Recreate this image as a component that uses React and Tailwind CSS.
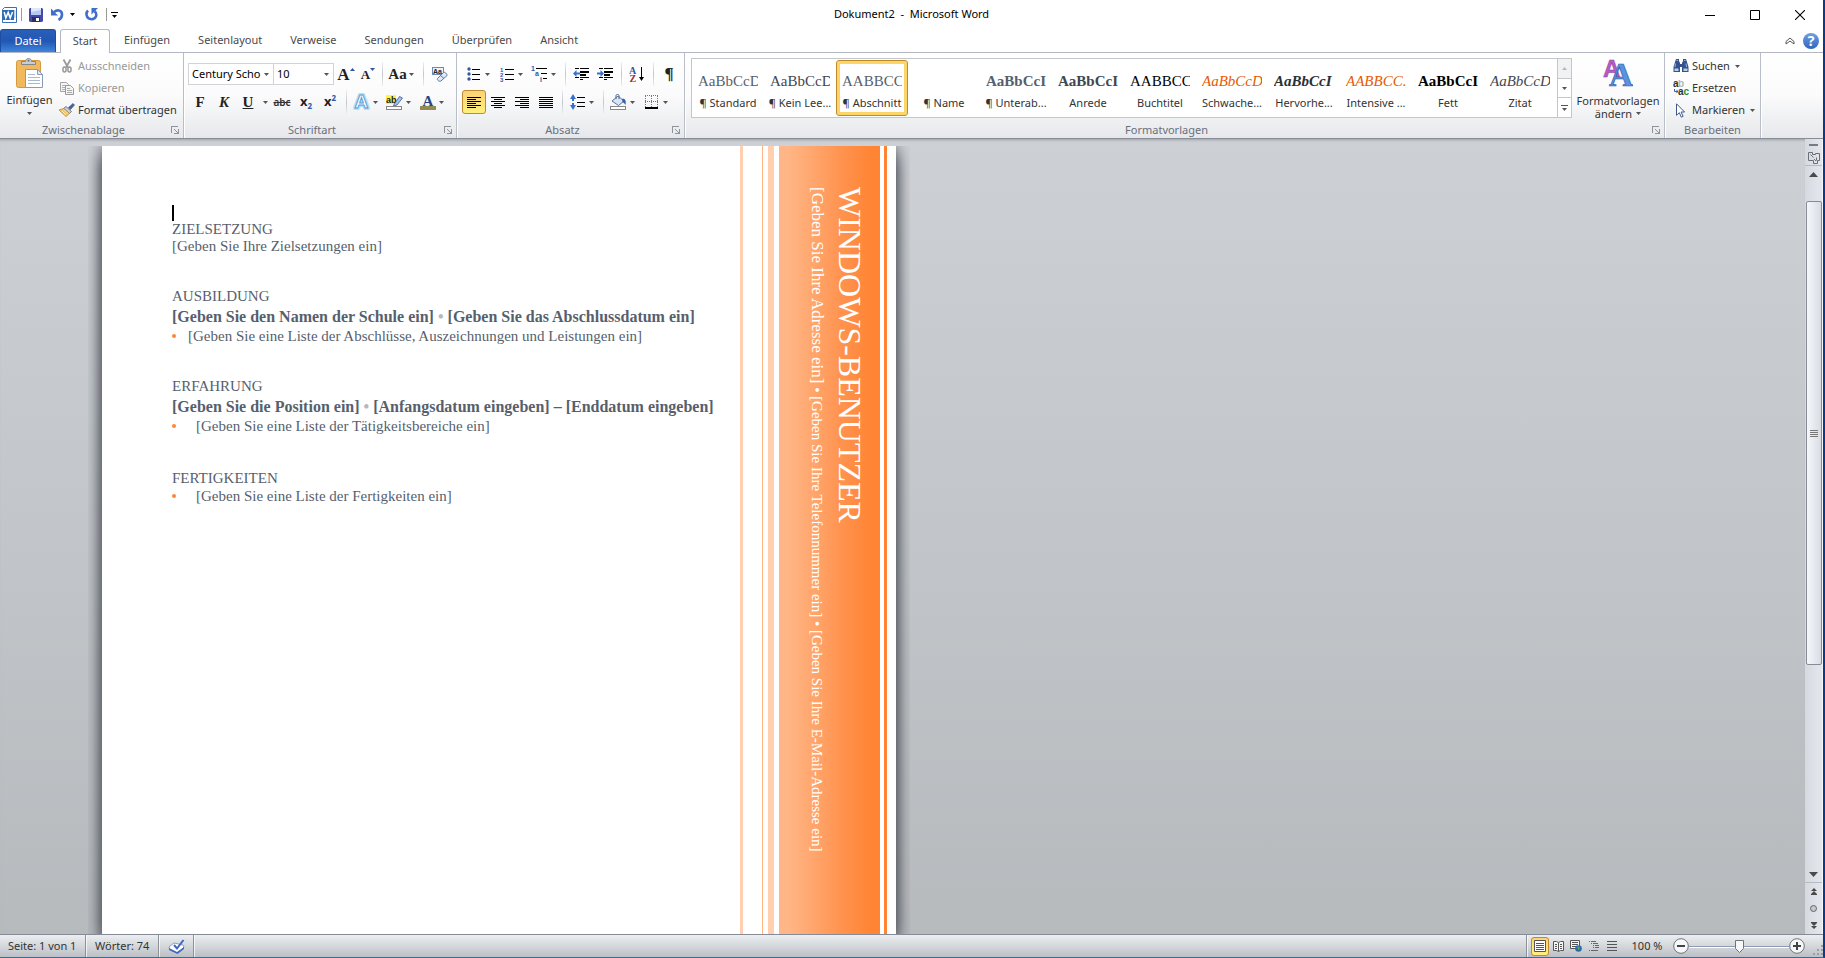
import React from "react";

const SERIF = "font-['Liberation_Serif',serif]";

/* ---------- small shared pieces ---------- */

function Caret({ className = "text-[#555]" }) {
  return (
    <svg width="5" height="3" viewBox="0 0 5 3" className={"shrink-0 " + className} aria-hidden="true">
      <path d="M0 0h5L2.5 3z" fill="currentColor" />
    </svg>
  );
}

function Tool({ label, children, active, className = "w-6" }) {
  return (
    <button
      type="button"
      aria-label={label}
      className={
        "flex h-6 shrink-0 items-center justify-center " +
        (active
          ? "rounded-[3px] border border-[#c08a30] bg-linear-to-b from-[#fbd277] to-[#fff07c] "
          : "") +
        className
      }
    >
      {children}
    </button>
  );
}

function Split({ label, children }) {
  return (
    <button type="button" aria-label={label} className="flex h-6 w-[33px] shrink-0 items-center">
      <span className="flex w-[23px] items-center justify-center">{children}</span>
      <Caret />
    </button>
  );
}

function Sep() {
  return (
    <span className="flex h-6 w-2 shrink-0 justify-center">
      <span className="h-full w-px bg-linear-to-b from-[#eceef0] via-[#c3c7cd] to-[#eceef0]" />
    </span>
  );
}

function Launcher({ label }) {
  return (
    <button type="button" aria-label={label} className="flex h-4 w-4 items-center justify-center">
      <svg width="8" height="8" viewBox="0 0 8 8" shapeRendering="crispEdges">
        <path d="M0 7V0h7v1H1v6z" fill="#8f949b" />
        <path d="M3 3h1v1h1v1h1v1h1V3h1v5H3V7h3V6H5V5H4V4H3z" fill="#8f949b" />
      </svg>
    </button>
  );
}

function Group({ title, launcher, className = "", children }) {
  return (
    <section
      aria-label={title}
      className={"flex shrink-0 flex-col border-r border-[#b9bdc7] shadow-[1px_0_0_#ffffff] " + className}
    >
      <div className="flex-1">{children}</div>
      <div className="flex h-4 items-center">
        <span className="flex-1 text-center text-[#6a6f7c]">{title}</span>
        {launcher && <Launcher label={title + " öffnen"} />}
      </div>
    </section>
  );
}

function Lines({ rows }) {
  return (
    <svg width="14" height="13" viewBox="0 0 14 13" shapeRendering="crispEdges" fill="#000">
      {rows.map(([x, w], i) => (
        <rect key={i} x={x} y={i * 2 + 1} width={w} height="1" />
      ))}
    </svg>
  );
}

/* ---------- icons ---------- */

function WordIcon() {
  return (
    <svg width="16" height="16" viewBox="0 0 16 16">
      <path d="M1.5 2.5l2-2h12v15h-14z" fill="#fff" stroke="#3a6fb5" />
      <path d="M13 4h1.5M13 6h1.5M13 8h1.5M13 10h1.5" stroke="#7fa6d6" />
      <rect x="2" y="3" width="11" height="10" fill="#2b6cb8" />
      <path d="M3.2 5l1.6 6 2.4-5.6L9.2 11 11.500 5" fill="none" stroke="#fff" strokeWidth="1.500" />
    </svg>
  );
}

function SaveIcon() {
  return (
    <svg width="14" height="14" viewBox="0 0 14 14">
      <path d="M0 1l1-1h12l1 1v12l-1 1H1l-1-1z" fill="#4549a8" />
      <path d="M2 0h10v7H2z" fill="#dfe7fa" />
      <path d="M2 4l10-2v5H2z" fill="#b6c8f2" />
      <path d="M3 9h8v5H3z" fill="#2c2e66" />
      <path d="M7 10h3v3H7z" fill="#fff" />
    </svg>
  );
}

function UndoIcon() {
  return (
    <svg width="13" height="13" viewBox="0 0 13 13">
      <path d="M3 4C7 1 11 2.500 11 6.500 11 9 9.500 11 7.500 12" fill="none" stroke="#3f6fcc" strokeWidth="2.600" />
      <path d="M0 .5v7h7z" fill="#3f6fcc" />
    </svg>
  );
}

function RedoIcon() {
  return (
    <svg width="13" height="13" viewBox="0 0 13 13">
      <path d="M3 2.500C.5 5 1 11.200 6.500 11.200S12.300 5.500 9.500 3" fill="none" stroke="#3f6fcc" strokeWidth="2.600" />
      <path d="M6.500 0H13L6.500 6.500z" fill="#3f6fcc" />
    </svg>
  );
}

function PasteIcon() {
  return (
    <svg width="28" height="31" viewBox="0 0 28 31">
      <rect x="0.500" y="2.500" width="24" height="27" rx="2" fill="#f0b95e" stroke="#d39a3f" />
      <path d="M5.500 6.500V3.500h4c0-4 6-4 6 0h4v3z" fill="#c9ccd0" stroke="#83868b" />
      <circle cx="12.500" cy="2.800" r="1" fill="#6d7075" />
      <path d="M9.500 11.500h12l5 5v13h-17z" fill="#fff" stroke="#8a9bb5" />
      <path d="M21.500 11.500v5h5z" fill="#e4ebf5" stroke="#8a9bb5" />
      <path d="M12 16.500h7M12 19.500h12M12 22.500h12M12 25.500h12" stroke="#a8b9d3" />
    </svg>
  );
}

function CutIcon() {
  return (
    <svg width="10" height="14" viewBox="0 0 10 14" fill="none" stroke="#9a9a9a">
      <path d="M1.500.5l4.500 8M8.500.5L4 8.500" strokeWidth="1.800" />
      <ellipse cx="2.500" cy="10.500" rx="1.600" ry="2.500" strokeWidth="1.500" />
      <ellipse cx="7.500" cy="10.500" rx="1.600" ry="2.500" strokeWidth="1.500" />
    </svg>
  );
}

function CopyIcon() {
  return (
    <svg width="16" height="13" viewBox="0 0 16 13">
      <path d="M1.500.5h6l2 2v7h-8z" fill="#f4f4f4" stroke="#a3a3a3" />
      <path d="M3 3.500h4M3 5.500h3M3 7.500h3" stroke="#b0b0b0" />
      <path d="M6.500 3.500h5l3 3v6h-8z" fill="#f4f4f4" stroke="#999" />
      <path d="M8 6.500h3M8 8.500h5M8 10.500h5" stroke="#aaa" />
    </svg>
  );
}

function BrushIcon() {
  return (
    <svg width="16" height="14" viewBox="0 0 16 14">
      <path d="M9.500 4.500L14 .5l1.500 1.500-4 4.500z" fill="#4a63a0" stroke="#33477a" strokeWidth=".6" />
      <path d="M7 3.500l5.500 5-2 2-6-5z" fill="#c9cdd6" stroke="#5f6570" strokeWidth=".8" />
      <path d="M4.500 5.500l6 5-3.500 3-7-6.500z" fill="#f3c56a" stroke="#b98a35" strokeWidth=".8" />
      <path d="M3 8l4 4M5 6.700l4 4" stroke="#fff3c9" strokeWidth=".8" />
    </svg>
  );
}

function ClearFormatIcon() {
  return (
    <svg width="17" height="16" viewBox="0 0 17 16">
      <rect x="1.500" y="1.500" width="11" height="7" fill="#e9f1fb" stroke="#6b8bb8" />
      <text x="2" y="8" fontSize="7" fontWeight="700" fontFamily="Liberation Sans" fill="#222">Aa</text>
      <path d="M6.500 12.500l6-6c1-1 4 1.500 3.500 3l-6 5.500c-1.500 1-4.500-1-3.500-2.500z" fill="#dfe9f7" stroke="#5c76a4" />
      <path d="M9.500 9.500l3.500 3" stroke="#5c76a4" />
    </svg>
  );
}

function HighlightIcon() {
  return (
    <svg width="17" height="15" viewBox="0 0 17 15">
      <rect x="0" y="0" width="10" height="9" fill="#fff34d" />
      <text x="0" y="8" fontSize="9" fontWeight="700" fontFamily="Liberation Sans" fill="#222">ab</text>
      <path d="M8 9.500l5.500-8 3 1.500-5.500 7-3.500 1z" fill="#a9c3e8" stroke="#3d5a8f" strokeWidth=".8" />
      <rect x="0.500" y="11.500" width="15" height="3" fill="#fff" stroke="#888" />
    </svg>
  );
}

function FontColorIcon() {
  return (
    <svg width="16" height="15" viewBox="0 0 16 15">
      <text x="2.500" y="10.500" fontSize="15" fontWeight="700" fontFamily="Liberation Serif" fill="#27457f">A</text>
      <rect x="0" y="11" width="16" height="4" fill="#948a54" />
    </svg>
  );
}

function EffectIcon() {
  return (
    <svg width="17" height="18" viewBox="0 0 17 18">
      <text x="1.500" y="15" fontSize="19" fontWeight="700" fontFamily="Liberation Sans" fill="#fff" stroke="#b5e0f7" strokeWidth="4" strokeLinejoin="round" paintOrder="stroke" aria-hidden="true">A</text>
      <text x="1.500" y="15" fontSize="19" fontWeight="700" fontFamily="Liberation Sans" fill="#fff" stroke="#5b9bd5" strokeWidth="1">A</text>
    </svg>
  );
}

function BulletsIcon() {
  return (
    <svg width="14" height="14" viewBox="0 0 14 14">
      <g fill="#2f57a6">
        <circle cx="2" cy="2" r="1.700" />
        <circle cx="2" cy="7" r="1.700" />
        <circle cx="2" cy="12" r="1.700" />
      </g>
      <path d="M5 2.500h8M5 7.500h8M5 12.500h8" stroke="#000" />
    </svg>
  );
}

function NumbersIcon() {
  return (
    <svg width="14" height="15" viewBox="0 0 14 15">
      <g fill="#2f57a6" fontSize="6" fontWeight="700" fontFamily="Liberation Sans">
        <text x="0" y="4.500">1</text>
        <text x="0" y="9.500">2</text>
        <text x="0" y="14.500">3</text>
      </g>
      <path d="M5 2.500h9M5 7.500h9M5 12.500h9" stroke="#000" />
    </svg>
  );
}

function MultiLevelIcon() {
  return (
    <svg width="17" height="16" viewBox="0 0 17 16">
      <g fill="#2f57a6" fontSize="7" fontWeight="700" fontFamily="Liberation Sans">
        <text x="0" y="5">1</text>
        <text x="4" y="10">a</text>
        <text x="9" y="15.500">i</text>
      </g>
      <path d="M5 2.500h11M10 7.500h6M12 12.500h4" stroke="#000" />
    </svg>
  );
}

function IndentIcon({ out }) {
  return (
    <svg width="17" height="14" viewBox="0 0 17 14">
      <g shapeRendering="crispEdges" fill="#000">
        <rect x="2" y="1" width="4" height="1" />
        <rect x="7" y="1" width="9" height="1" />
        <rect x="7" y="4" width="9" height="2" />
        <rect x="7" y="7" width="6" height="2" />
        <rect x="2" y="10" width="4" height="1" />
        <rect x="7" y="10" width="9" height="1" />
        <rect x="7" y="12" width="3" height="1" />
      </g>
      {out ? (
        <path d="M0 6.500L3.500 3v2.500H7v2H3.500V10z" fill="#3a6fd0" />
      ) : (
        <path d="M7 6.500L3.500 3v2.500H0v2h3.500V10z" fill="#3a6fd0" />
      )}
    </svg>
  );
}

function SortIcon() {
  return (
    <svg width="16" height="16" viewBox="0 0 16 16">
      <text x="0" y="7.500" fontSize="10" fontWeight="700" fontFamily="Liberation Serif" fill="#2f57a6">A</text>
      <text x="0.500" y="15.500" fontSize="10" fontWeight="700" fontFamily="Liberation Serif" fill="#9c2f2f">Z</text>
      <path d="M12.500 1v13" stroke="#000" />
      <path d="M10 11h5l-2.500 4z" fill="#000" />
    </svg>
  );
}

function SpacingIcon() {
  return (
    <svg width="16" height="16" viewBox="0 0 16 16">
      <path d="M0 5l3-5 3 5H4v2H2V5zM0 11l3 5 3-5H4V9H2v2z" fill="#3a6fd0" />
      <path d="M7 3.500h8M7 8.500h8M7 12.500h8" stroke="#000" />
    </svg>
  );
}

function FillIcon() {
  return (
    <svg width="17" height="16" viewBox="0 0 17 16">
      <path d="M2 7l6-5 6 5-5.500 4.500z" fill="#d7e4f5" stroke="#4d6690" strokeWidth=".9" />
      <path d="M6 5V1.500c0-1.500 3-1.500 3 0V5" fill="none" stroke="#4d6690" />
      <path d="M12 5c3-1 4.500 2 3.500 6-1-1.500-1.500-2-3-3z" fill="#2f62b5" />
      <rect x="0.500" y="12.500" width="15" height="3" fill="#fff" stroke="#888" />
    </svg>
  );
}

function BorderIcon() {
  return (
    <svg width="14" height="14" viewBox="0 0 14 14" shapeRendering="crispEdges">
      <path d="M.5 1v11M6.500 1v11M12.500 1v11M0 .5h13M0 6.500h13" stroke="#777" strokeDasharray="1 1" />
      <path d="M0 13h13" stroke="#000" strokeWidth="2" />
    </svg>
  );
}

function ChangeStylesIcon() {
  return (
    <svg width="30" height="28" viewBox="0 0 30 28">
      <text x="0" y="18" fontSize="24" fontWeight="700" fontFamily="Liberation Sans" fill="#b45cc4" stroke="#8d3b9e" strokeWidth=".5">A</text>
      <text x="6" y="27" fontSize="33" fontWeight="700" fontFamily="Liberation Serif" fill="#5b92e0" stroke="#2f62ad" strokeWidth=".7">A</text>
    </svg>
  );
}

function BinocularsIcon() {
  return (
    <svg width="16" height="14" viewBox="0 0 16 14">
      <path d="M3 0h3v2l1 2v9H.5V8L2 3zM13 0h-3v2L9 4v9h6.500V8L14 3z" fill="#34528c" />
      <path d="M6.500 5h3v3h-3z" fill="#34528c" />
      <path d="M2.500 4.500L2 8M13 4.500l.5 3.500M3.500 1.500h1.500M11 1.500h1.500" stroke="#9db6de" />
      <path d="M1.500 9.500h4v2.500h-4zM10.500 9.500h4v2.500h-4z" fill="#b9cdea" />
    </svg>
  );
}

function ReplaceIcon() {
  return (
    <svg width="16" height="16" viewBox="0 0 16 16" fontFamily="Liberation Sans" fontWeight="700" fontSize="10">
      <text x="0" y="7" fill="#333">a</text>
      <text x="5" y="7" fill="#b5b5b5">b</text>
      <text x="5" y="15" fill="#333">a</text>
      <text x="10.500" y="15" fill="#1f8f2f">c</text>
      <path d="M1.500 9v2.500H4" fill="none" stroke="#3560ad" />
      <path d="M3.500 9.500v4l2-2z" fill="#3560ad" />
    </svg>
  );
}

function PointerIcon() {
  return (
    <svg width="16" height="15" viewBox="0 0 16 15">
      <path d="M3.500.8v11.500l2.800-2.600 2 4.500 1.800-.8-2-4.400h3.500z" fill="#fff" stroke="#40598c" />
    </svg>
  );
}

function ProofIcon() {
  return (
    <svg width="17" height="15" viewBox="0 0 17 15">
      <path d="M1 8l5-4 9 2 1 2-6 6-8-3z" fill="#fff" stroke="#7d8699" strokeWidth=".8" />
      <path d="M1 9l8 4 7-5v2l-6.500 5L1 11z" fill="#3f66c0" />
      <path d="M6 6l3 3.500L15.500 1" fill="none" stroke="#3f66c0" strokeWidth="2" />
    </svg>
  );
}

/* ---------- title bar and tabs ---------- */

function TitleBar() {
  return (
    <header className="flex h-[29px] shrink-0 items-center">
      <div className="flex flex-1 items-center">
        <span className="ml-px">
          <WordIcon />
        </span>
        <span className="ml-1 h-[13px] w-px bg-[#9a9a9a]" />
        <button type="button" aria-label="Speichern" className="ml-[7px]">
          <SaveIcon />
        </button>
        <button type="button" aria-label="Rückgängig" className="ml-2 flex items-center gap-1.5">
          <UndoIcon />
          <Caret className="text-black" />
        </button>
        <button type="button" aria-label="Wiederholen" className="ml-2.5">
          <RedoIcon />
        </button>
        <span className="ml-2 h-[13px] w-px bg-[#9a9a9a]" />
        <button type="button" aria-label="Symbolleiste anpassen" className="ml-1 flex flex-col items-center gap-0.5">
          <span className="h-px w-[7px] bg-black" />
          <Caret className="text-black" />
        </button>
      </div>
      <h1 className="text-center whitespace-pre text-black">Dokument2&nbsp; -&nbsp; Microsoft Word</h1>
      <div className="flex flex-1 items-center justify-end gap-[35px]">
        <button type="button" aria-label="Minimieren">
          <svg width="10" height="10" viewBox="0 0 10 10"><path d="M0 5.500h10" stroke="#000" /></svg>
        </button>
        <button type="button" aria-label="Maximieren">
          <svg width="10" height="10" viewBox="0 0 10 10"><path d="M.5.5h9v9h-9z" fill="none" stroke="#000" /></svg>
        </button>
        <button type="button" aria-label="Schließen" className="mr-[18px]">
          <svg width="10" height="10" viewBox="0 0 10 10"><path d="M0 0l10 10M10 0L0 10" stroke="#000" strokeWidth="1.100" /></svg>
        </button>
      </div>
    </header>
  );
}

const TABS = ["Einfügen", "Seitenlayout", "Verweise", "Sendungen", "Überprüfen", "Ansicht"];

function TabBar() {
  return (
    <nav className="flex h-6 shrink-0 items-stretch border-b border-[#b3b7c1] text-[#4a4a4a]">
      <button type="button" className="w-14 rounded-t-[3px] border border-b-0 border-[#1c4fa3] bg-linear-to-b from-[#2a5fb8] via-[#2157b3] to-[#3f86dd] text-white">
        Datei
      </button>
      <button type="button" className="-mb-px ml-1 w-[50px] rounded-t-[3px] border border-b-0 border-[#b3b7c1] bg-white">
        Start
      </button>
      {TABS.map((t) => (
        <button key={t} type="button" className="px-[14px]">
          {t}
        </button>
      ))}
      <div className="ml-auto flex items-center gap-2 pr-1">
        <button type="button" aria-label="Menüband minimieren">
          <svg width="10" height="8" viewBox="0 0 10 8">
            <path d="M5 1L1 4.500V7l4-3 4 3V4.500z" fill="none" stroke="#555" />
          </svg>
        </button>
        <button type="button" aria-label="Hilfe" className="flex h-4 w-4 items-center justify-center rounded-full bg-linear-to-b from-[#6f9fe6] to-[#2f65bb] text-sm leading-none font-bold text-white">
          ?
        </button>
      </div>
    </nav>
  );
}

/* ---------- ribbon ---------- */

const ROW = "flex h-[22px] items-center gap-[3px] whitespace-nowrap ";

function ClipboardGroup() {
  return (
    <Group title="Zwischenablage" launcher className="w-[184px]">
      <div className="flex">
        <button type="button" className="flex w-[59px] flex-col items-center pt-[5px] text-[#333]">
          <PasteIcon />
          <span className="mt-[3px] leading-4">Einfügen</span>
          <span className="mt-1">
            <Caret />
          </span>
        </button>
        <div className="flex flex-col pt-0.5">
          <button type="button" disabled className={ROW + "text-[#999]"}>
            <span className="flex w-4 justify-center"><CutIcon /></span>Ausschneiden
          </button>
          <button type="button" disabled className={ROW + "text-[#999]"}>
            <CopyIcon />Kopieren
          </button>
          <button type="button" className={ROW + "text-[#333]"}>
            <BrushIcon />Format übertragen
          </button>
        </div>
      </div>
    </Group>
  );
}

function Combo({ label, value, className }) {
  return (
    <span className={"relative flex h-[22px] items-center border border-[#d0d3d8] bg-white " + className}>
      <select aria-label={label} defaultValue={value} className="h-full w-full appearance-none bg-transparent pl-[3px] text-[11px] text-black outline-none">
        <option>{value}</option>
      </select>
      <span className="pointer-events-none absolute right-1 flex">
        <Caret />
      </span>
    </span>
  );
}

function FontGroup() {
  const g = SERIF + " font-bold text-[#222] leading-none ";
  return (
    <Group title="Schriftart" launcher className="w-[273px]">
      <div className="flex flex-col gap-1 pt-[9px] pl-1">
        <div className="flex items-center">
          <Combo label="Schriftart" value="Century Scho" className="w-[86px]" />
          <Combo label="Schriftgrad" value="10" className="w-[60px] border-l-0" />
          <Tool label="Schriftart vergrößern">
            <span className={g + "text-[17px]"}>A</span>
            <svg width="5" height="3" className="mb-2.5"><path d="M0 3h5L2.500 0z" fill="#2f57a6" /></svg>
          </Tool>
          <Tool label="Schriftart verkleinern" className="w-5">
            <span className={g + "text-[13px]"}>A</span>
            <svg width="5" height="3" className="mb-2.5"><path d="M0 0h5L2.500 3z" fill="#2f57a6" /></svg>
          </Tool>
          <Sep />
          <Split label="Groß-/Kleinschreibung">
            <span className={g + "text-[15px]"}>Aa</span>
          </Split>
          <Sep />
          <Tool label="Formatierung löschen"><ClearFormatIcon /></Tool>
        </div>
        <div className="flex items-center">
          <Tool label="Fett"><span className={g + "text-[15px]"}>F</span></Tool>
          <Tool label="Kursiv"><span className={g + "text-[15px] italic"}>K</span></Tool>
          <Tool label="Unterstrichen"><span className={g + "text-[15px] underline"}>U</span></Tool>
          <span className="flex w-2.5 justify-center"><Caret /></span>
          <Tool label="Durchgestrichen"><span className="text-[10px] font-semibold text-[#333] line-through">abc</span></Tool>
          <Tool label="Tiefgestellt">
            <span className="text-[13px] font-bold text-[#222]">x</span>
            <span className="mt-2 text-[8px] font-bold text-[#2f57a6]">2</span>
          </Tool>
          <Tool label="Hochgestellt">
            <span className="text-[13px] font-bold text-[#222]">x</span>
            <span className="mb-2 text-[8px] font-bold text-[#2f57a6]">2</span>
          </Tool>
          <Sep />
          <Split label="Texteffekte"><EffectIcon /></Split>
          <Split label="Texthervorhebungsfarbe"><HighlightIcon /></Split>
          <Split label="Schriftfarbe"><FontColorIcon /></Split>
        </div>
      </div>
    </Group>
  );
}

const LEFT = [[0, 14], [0, 9], [0, 14], [0, 9], [0, 14], [0, 9]];
const CENTER = [[0, 14], [3, 8], [0, 14], [3, 8], [0, 14], [3, 8]];
const RIGHT = [[0, 14], [5, 9], [0, 14], [5, 9], [0, 14], [5, 9]];
const FULL = [[0, 14], [0, 14], [0, 14], [0, 14], [0, 14], [0, 14]];

function ParagraphGroup() {
  return (
    <Group title="Absatz" launcher className="w-[228px]">
      <div className="flex flex-col gap-1 pt-[9px] pl-[5px]">
        <div className="flex items-center">
          <Split label="Aufzählungszeichen"><BulletsIcon /></Split>
          <Split label="Nummerierung"><NumbersIcon /></Split>
          <Split label="Liste mit mehreren Ebenen"><MultiLevelIcon /></Split>
          <Sep />
          <Tool label="Einzug verkleinern"><IndentIcon out /></Tool>
          <Tool label="Einzug vergrößern"><IndentIcon /></Tool>
          <Sep />
          <Tool label="Sortieren"><SortIcon /></Tool>
          <Sep />
          <Tool label="Alle anzeigen"><span className={SERIF + " text-[17px] font-bold text-[#222]"}>¶</span></Tool>
        </div>
        <div className="flex items-center">
          <Tool label="Linksbündig" active><Lines rows={LEFT} /></Tool>
          <Tool label="Zentriert"><Lines rows={CENTER} /></Tool>
          <Tool label="Rechtsbündig"><Lines rows={RIGHT} /></Tool>
          <Tool label="Blocksatz"><Lines rows={FULL} /></Tool>
          <Sep />
          <Split label="Zeilenabstand"><SpacingIcon /></Split>
          <Sep />
          <Split label="Schattierung"><FillIcon /></Split>
          <Split label="Rahmen"><BorderIcon /></Split>
        </div>
      </div>
    </Group>
  );
}

const STYLES = [
  { s: "AaBbCcDc", n: "¶ Standard", c: "text-[15px] text-[#575f6d]" },
  { s: "AaBbCcDc", n: "¶ Kein Lee...", c: "text-[15px] text-[#414751]" },
  { s: "AABBCC", n: "¶ Abschnitt", c: "text-[15px] text-[#575f6d]", active: true },
  { s: "", n: "¶ Name", c: "text-[15px]" },
  { s: "AaBbCcI", n: "¶ Unterab...", c: "text-[15px] font-bold text-[#575f6d]" },
  { s: "AaBbCcI", n: "Anrede", c: "text-[15px] font-bold text-[#414751]" },
  { s: "AABBCCI", n: "Buchtitel", c: "text-[15px] text-black" },
  { s: "AaBbCcDc", n: "Schwache...", c: "text-[15px] italic text-[#e65b01]" },
  { s: "AaBbCcI", n: "Hervorhe...", c: "text-[15px] font-bold italic text-[#2b2f36]" },
  { s: "AABBCC.", n: "Intensive ...", c: "text-[15px] italic text-[#e65b01]" },
  { s: "AaBbCcI", n: "Fett", c: "text-[15px] font-bold text-black" },
  { s: "AaBbCcDc", n: "Zitat", c: "text-[15px] italic text-[#414751]" },
];

function StyleItem({ s, n, c, active }) {
  return (
    <button
      type="button"
      className={
        "flex w-[72px] shrink-0 flex-col items-center justify-end pb-1 " +
        (active ? "rounded-[3px] border border-[#bd8a2c] shadow-[inset_0_0_0_3px_#fbd567]" : "border border-transparent")
      }
    >
      <span className={"h-5 w-[60px] overflow-hidden text-left leading-5 whitespace-nowrap " + SERIF + " " + c}>{s}</span>
      <span className="mt-1 leading-4 whitespace-nowrap text-[#333]">{n}</span>
    </button>
  );
}

function StylesGroup() {
  return (
    <Group title="Formatvorlagen" launcher className="w-[980px]">
      <div className="flex">
        <div className="mt-[5px] ml-1.5 flex h-[60px] border border-[#c3c7cb] bg-white">
          <div className="flex py-px">
            {STYLES.map((st) => (
              <StyleItem key={st.n} {...st} />
            ))}
          </div>
          <div className="ml-px flex w-3.5 flex-col divide-y divide-[#c3c7cb] border-l border-[#c3c7cb]">
            <button type="button" aria-label="Zeile nach oben" className="flex flex-1 items-center justify-center bg-[#f1f2f4]">
              <svg width="5" height="3"><path d="M0 3h5L2.500 0z" fill="#b5b8bd" /></svg>
            </button>
            <button type="button" aria-label="Zeile nach unten" className="flex flex-1 items-center justify-center">
              <Caret />
            </button>
            <button type="button" aria-label="Weitere Formatvorlagen" className="flex flex-1 flex-col items-center justify-center gap-0.5">
              <span className="h-px w-[7px] bg-[#555]" />
              <Caret />
            </button>
          </div>
        </div>
        <button type="button" className="flex flex-1 flex-col items-center pt-1.5 leading-[13px] text-[#333]">
          <ChangeStylesIcon />
          <span className="mt-[7px]">Formatvorlagen</span>
          <span className="flex items-center gap-1">
            ändern <Caret />
          </span>
        </button>
      </div>
    </Group>
  );
}

function EditGroup() {
  return (
    <Group title="Bearbeiten" className="w-24">
      <div className="flex flex-col pt-0.5 pl-2 text-[#333]">
        <button type="button" className={ROW}>
          <BinocularsIcon />Suchen<span className="ml-0.5"><Caret /></span>
        </button>
        <button type="button" className={ROW}>
          <ReplaceIcon />Ersetzen
        </button>
        <button type="button" className={ROW}>
          <PointerIcon />Markieren<span className="ml-0.5"><Caret /></span>
        </button>
      </div>
    </Group>
  );
}

function Ribbon() {
  return (
    <div className="flex h-[86px] shrink-0 overflow-hidden border-b border-[#888d96] bg-linear-to-b from-white via-[#fbfbfc] to-[#e6e8eb]">
      <ClipboardGroup />
      <FontGroup />
      <ParagraphGroup />
      <StylesGroup />
      <EditGroup />
    </div>
  );
}

/* ---------- document ---------- */

function Bullet({ wide, children }) {
  return (
    <li className="flex items-center leading-[18px]">
      <span className={"shrink-0 " + (wide ? "w-6" : "w-4")}>
        <span className="block h-1 w-1 rounded-full bg-[#fe8637]" />
      </span>
      {children}
    </li>
  );
}

function Dot() {
  return <span className="text-[#b4b8c1]">•</span>;
}

function Resume() {
  return (
    <article className={"min-w-0 flex-1 pt-[59px] pl-[70px] text-[15px] whitespace-nowrap text-[#575f6d] " + SERIF}>
      <div className="h-4 w-0.5 bg-black" />
      <h2 className="leading-[17px]">ZIELSETZUNG</h2>
      <p className="leading-[17px]">[Geben Sie Ihre Zielsetzungen ein]</p>

      <h2 className="mt-8 leading-[18px]">AUSBILDUNG</h2>
      <h3 className="mt-0.5 text-base leading-5 font-bold">
        [Geben Sie den Namen der Schule ein] <Dot /> [Geben Sie das Abschlussdatum ein]
      </h3>
      <ul>
        <Bullet>[Geben Sie eine Liste der Abschlüsse, Auszeichnungen und Leistungen ein]</Bullet>
      </ul>

      <h2 className="mt-8 leading-[18px]">ERFAHRUNG</h2>
      <h3 className="mt-0.5 text-base leading-5 font-bold">
        [Geben Sie die Position ein] <Dot /> [Anfangsdatum eingeben] – [Enddatum eingeben]
      </h3>
      <ul>
        <Bullet wide>[Geben Sie eine Liste der Tätigkeitsbereiche ein]</Bullet>
      </ul>

      <h2 className="mt-[34px] leading-[18px]">FERTIGKEITEN</h2>
      <ul>
        <Bullet wide>[Geben Sie eine Liste der Fertigkeiten ein]</Bullet>
      </ul>
    </article>
  );
}

function SideBand() {
  return (
    <aside className="flex shrink-0">
      <div className="w-[3px] bg-[#ffcfaf]" />
      <div className="ml-[19px] w-px bg-[#ffb480]" />
      <div className="ml-[5px] w-1.5 bg-[#ffcfaf]" />
      <div className={"ml-[5px] flex w-[101px] flex-row-reverse gap-[3px] bg-linear-to-r from-[#ffb585] from-10% via-[#ff9450] via-60% to-[#ff8534] to-90% pt-[41px] pr-3 text-white " + SERIF}>
        <p className="text-[32px] leading-9 whitespace-nowrap [writing-mode:vertical-rl]">WINDOWS-BENUTZER</p>
        <p className="text-[15px] leading-6 whitespace-nowrap [writing-mode:vertical-rl]">
          <span className="text-[17px]">[Geben Sie Ihre Adresse ein]</span> • [Geben Sie Ihre Telefonnummer ein] • [Geben Sie Ihre E-Mail-Adresse ein]
        </p>
      </div>
      <div className="ml-1 w-[3px] bg-[#ff8534]" />
      <div className="w-[9px]" />
    </aside>
  );
}

function ScrollBar() {
  return (
    <div className="flex w-[18px] shrink-0 flex-col items-center border-r border-[#f4f5f8] bg-linear-to-r from-[#d6d9e0] to-[#e4e7ee]">
      <div className="mt-[5px] h-0.5 w-[9px] bg-[#777b82]" />
      <button type="button" aria-label="Lineal" className="mt-1 flex h-[15px] items-center">
        <svg width="12" height="12" viewBox="0 0 12 12" fill="none" stroke="#6b6f76">
          <path d="M.5.5h4v2h3v-1h4v7h-2v3h-4v-3h-5z" />
          <path d="M2.500 2.500l3 3M6 7l2 2M8.500 5.500v3" />
        </svg>
      </button>
      <div className="w-full border-b border-[#b6bac2]" />
      <button type="button" aria-label="Nach oben" className="flex h-[35px] items-start pt-1.5">
        <svg width="9" height="5"><path d="M0 5h9L4.500 0z" fill="#4a4a4a" /></svg>
      </button>
      <div className="flex h-[464px] min-h-0 w-4 shrink flex-col items-center justify-center gap-px rounded-xs border border-[#868b95] bg-linear-to-r from-[#f4f7fb] to-[#d9dce3]">
        <span className="h-px w-2 bg-[#777]" />
        <span className="h-px w-2 bg-[#777]" />
        <span className="h-px w-2 bg-[#777]" />
        <span className="h-px w-2 bg-[#777]" />
      </div>
      <div className="flex-1" />
      <button type="button" aria-label="Nach unten" className="flex h-[15px] items-center">
        <svg width="9" height="5"><path d="M0 0h9L4.500 5z" fill="#4a4a4a" /></svg>
      </button>
      <div className="w-full border-b border-[#b6bac2]" />
      <button type="button" aria-label="Vorherige Seite" className="flex h-[17px] items-center">
        <svg width="6" height="7" fill="#4a4a4a"><path d="M0 3h6L3 0zM0 6h6L3 3zM0 6h6v1H0z" /></svg>
      </button>
      <button type="button" aria-label="Browseobjekt auswählen" className="flex h-[17px] items-center">
        <span className="h-[7px] w-[7px] rounded-full border border-[#666] bg-[#c5c8cd]" />
      </button>
      <button type="button" aria-label="Nächste Seite" className="flex h-[17px] items-center">
        <svg width="6" height="7" fill="#4a4a4a"><path d="M0 1h6L3 4zM0 4h6L3 7zM0 0h6v1H0z" /></svg>
      </button>
    </div>
  );
}

function Workspace() {
  return (
    <main className="flex min-h-0 flex-1 bg-linear-to-b from-[#cdd0d5] to-[#b7babd]">
      <div className="flex min-w-0 flex-1 overflow-hidden pt-[7px] pl-[102px] shadow-[inset_0_3px_3px_-2px_#9da1a8]">
        <div className="flex w-[794px] shrink-0 bg-white shadow-[0_0_14px_#50555c,0_14px_14px_#50555c] [clip-path:inset(0_-14px_0_-14px)]">
          <Resume />
          <SideBand />
        </div>
      </div>
      <ScrollBar />
    </main>
  );
}

/* ---------- status bar ---------- */

function Divider() {
  return <span className="h-full w-0.5 shrink-0 border-l border-[#8e9298] bg-white/70" />;
}

function ViewButton({ label, active, children }) {
  return (
    <button
      type="button"
      aria-label={label}
      className={
        "flex h-[19px] w-[18px] items-center justify-center " +
        (active ? "rounded-[3px] border border-[#c08a30] bg-linear-to-b from-[#fbd277] to-[#fff07c]" : "")
      }
    >
      {children}
    </button>
  );
}

function StatusBar() {
  return (
    <footer className="flex h-[23px] shrink-0 items-center border-t border-[#868c97] bg-linear-to-b from-[#eceef1] to-[#bcc0c5] text-[#333]">
      <button type="button" className="w-[85px] pl-2 text-left">Seite: 1 von 1</button>
      <Divider />
      <button type="button" className="w-[71px] pl-2 text-left">Wörter: 74</button>
      <Divider />
      <button type="button" aria-label="Rechtschreibung" className="flex w-[33px] justify-center"><ProofIcon /></button>
      <Divider />
      <div className="ml-auto flex h-full items-center">
        <Divider />
        <div className="ml-[3px] flex items-center">
          <ViewButton label="Seitenlayout" active>
            <svg width="12" height="12" viewBox="0 0 12 12" className="shrink-0"><path d="M.5.5h11v11H.5z" fill="#fff" stroke="#555" /><path d="M2 3.500h8M2 5.500h8M2 7.500h8M2 9.500h8" stroke="#555" /></svg>
          </ViewButton>
          <ViewButton label="Vollbild-Lesemodus">
            <svg width="11" height="11" viewBox="0 0 11 11"><path d="M.5.5h3l2 1 2-1h3v9h-3l-2 1-2-1h-3z" fill="#f5f5f5" stroke="#555" /><path d="M5.500 2v8M2 3.500h2M2 5.500h2M2 7.500h2M7 3.500h2M7 5.500h2M7 7.500h2" stroke="#555" /></svg>
          </ViewButton>
          <ViewButton label="Weblayout">
            <svg width="12" height="12" viewBox="0 0 12 12"><path d="M.5.5h9v8h-9z" fill="#f5f5f5" stroke="#555" /><path d="M2 2.500h6M2 4.500h6M2 6.500h4" stroke="#555" /><circle cx="8.500" cy="8.500" r="3.300" fill="#2d6aa8" /><path d="M7 7l2-.5 1 1.500-1.500 2z" fill="#4fae5a" /></svg>
          </ViewButton>
          <ViewButton label="Gliederung">
            <svg width="10" height="10" viewBox="0 0 10 10"><path d="M0 .5h1M2 .5h5M2 2.500h1M4 2.500h5M4 4.500h1M6 4.500h4M4 6.500h1M6 6.500h4M0 9.500h1M2 9.500h7" stroke="#666" /></svg>
          </ViewButton>
          <ViewButton label="Entwurf">
            <svg width="10" height="10" viewBox="0 0 10 10"><path d="M0 .5h10M0 3.500h10M0 6.500h10M0 9.500h10" stroke="#555" /></svg>
          </ViewButton>
        </div>
        <button type="button" className="w-[52px] text-center">100 %</button>
        <button type="button" aria-label="Verkleinern">
          <svg width="16" height="16" viewBox="0 0 16 16"><circle cx="8" cy="8" r="7.300" fill="#f6f7f8" stroke="#6f747c" /><path d="M4 8h8" stroke="#444" strokeWidth="2" /></svg>
        </button>
        <div className="relative flex w-[100px] items-center">
          <svg width="100" height="14" viewBox="0 0 100 14">
            <path d="M0 7.500h100" stroke="#8e9cb3" />
            <path d="M0 8.500h100" stroke="#fff" />
            <path d="M46.500 1.500h8v8l-4 4-4-4z" fill="#f6f7f8" stroke="#6f747c" />
          </svg>
          <input type="range" aria-label="Zoom" min="0" max="200" defaultValue="100" className="absolute inset-0 w-full opacity-0" />
        </div>
        <button type="button" aria-label="Vergrößern">
          <svg width="16" height="16" viewBox="0 0 16 16"><circle cx="8" cy="8" r="7.300" fill="#f6f7f8" stroke="#6f747c" /><path d="M4 8h8M8 4v8" stroke="#444" strokeWidth="2" /></svg>
        </button>
        <span className="ml-2 flex h-full items-end pb-0.5">
          <svg width="10" height="10" viewBox="0 0 10 10" fill="#9a9fa6">
            <path d="M8 0h2v2H8zM4 4h2v2H4zM8 4h2v2H8zM0 8h2v2H0zM4 8h2v2H4zM8 8h2v2H8z" />
          </svg>
        </span>
      </div>
    </footer>
  );
}

export default function App() {
  return (
    <div className="flex h-screen flex-col overflow-hidden border-r-2 border-b border-r-[#0b3a86] border-b-[#1478b4] bg-white font-['Noto_Sans',sans-serif] text-[11px]">
      <TitleBar />
      <TabBar />
      <Ribbon />
      <Workspace />
      <StatusBar />
    </div>
  );
}
